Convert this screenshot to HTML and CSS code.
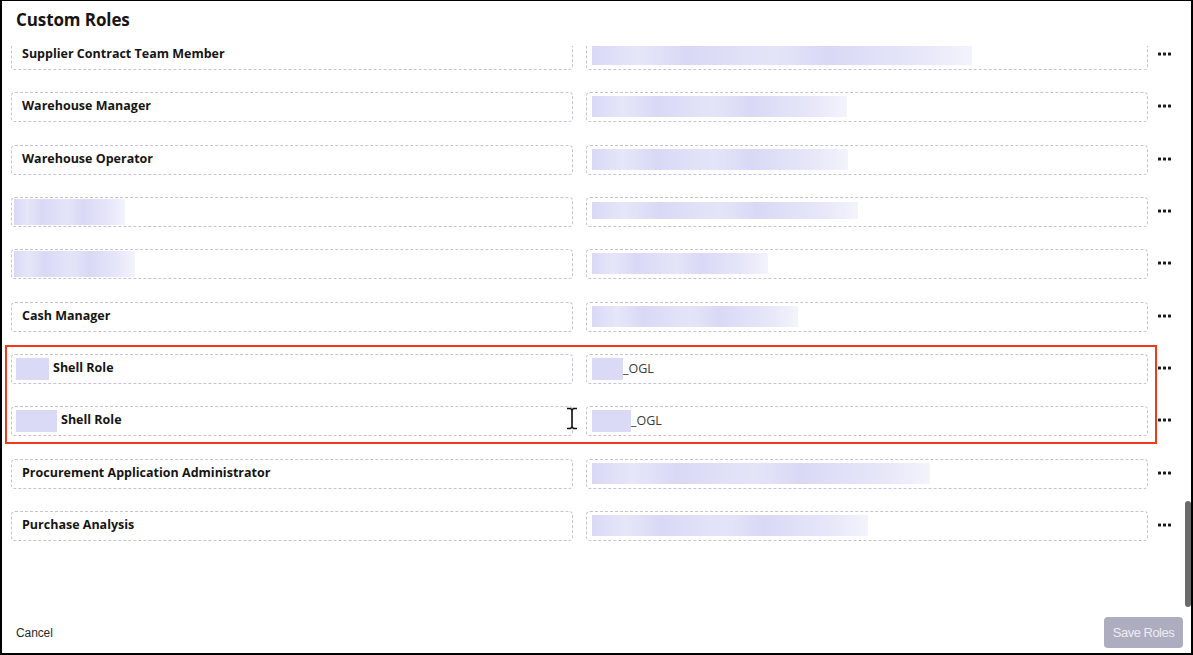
FILE: index.html
```html
<!DOCTYPE html>
<html>
<head>
<meta charset="utf-8">
<title>Custom Roles</title>
<link rel="stylesheet" href="styles.css">
</head>
<body>
<div class="dialog">
  <header class="header"><h1 class="title">Custom Roles</h1></header>
  <div class="list">
    <div class="list-inner">
      <div class="row">
        <div class="field name">Supplier Contract Team Member</div>
        <div class="field code"><span class="blur" style="width:380px"></span></div>
        <div class="more"><svg width="13" height="4" viewBox="0 0 13 4"><rect x="0" y="0.5" width="3" height="3" rx="0.6"/><rect x="5" y="0.5" width="3" height="3" rx="0.6"/><rect x="10" y="0.5" width="3" height="3" rx="0.6"/></svg></div>
      </div>
      <div class="row">
        <div class="field name">Warehouse Manager</div>
        <div class="field code"><span class="blur" style="width:255px"></span></div>
        <div class="more"><svg width="13" height="4" viewBox="0 0 13 4"><rect x="0" y="0.5" width="3" height="3" rx="0.6"/><rect x="5" y="0.5" width="3" height="3" rx="0.6"/><rect x="10" y="0.5" width="3" height="3" rx="0.6"/></svg></div>
      </div>
      <div class="row">
        <div class="field name">Warehouse Operator</div>
        <div class="field code"><span class="blur" style="width:256px"></span></div>
        <div class="more"><svg width="13" height="4" viewBox="0 0 13 4"><rect x="0" y="0.5" width="3" height="3" rx="0.6"/><rect x="5" y="0.5" width="3" height="3" rx="0.6"/><rect x="10" y="0.5" width="3" height="3" rx="0.6"/></svg></div>
      </div>
      <div class="row">
        <div class="field name"><span class="blur tall" style="width:111px"></span></div>
        <div class="field code"><span class="blur thin" style="width:266px"></span></div>
        <div class="more"><svg width="13" height="4" viewBox="0 0 13 4"><rect x="0" y="0.5" width="3" height="3" rx="0.6"/><rect x="5" y="0.5" width="3" height="3" rx="0.6"/><rect x="10" y="0.5" width="3" height="3" rx="0.6"/></svg></div>
      </div>
      <div class="row">
        <div class="field name"><span class="blur tall" style="width:121px"></span></div>
        <div class="field code"><span class="blur" style="width:176px"></span></div>
        <div class="more"><svg width="13" height="4" viewBox="0 0 13 4"><rect x="0" y="0.5" width="3" height="3" rx="0.6"/><rect x="5" y="0.5" width="3" height="3" rx="0.6"/><rect x="10" y="0.5" width="3" height="3" rx="0.6"/></svg></div>
      </div>
      <div class="row">
        <div class="field name">Cash Manager</div>
        <div class="field code"><span class="blur" style="width:206px"></span></div>
        <div class="more"><svg width="13" height="4" viewBox="0 0 13 4"><rect x="0" y="0.5" width="3" height="3" rx="0.6"/><rect x="5" y="0.5" width="3" height="3" rx="0.6"/><rect x="10" y="0.5" width="3" height="3" rx="0.6"/></svg></div>
      </div>
      <div class="group">
        <div class="row">
          <div class="field name"><span class="blur inline" style="width:33px"></span>Shell Role</div>
          <div class="field code"><span class="blur inline" style="width:31px"></span><span class="code-text">_OGL</span></div>
          <div class="more"><svg width="13" height="4" viewBox="0 0 13 4"><rect x="0" y="0.5" width="3" height="3" rx="0.6"/><rect x="5" y="0.5" width="3" height="3" rx="0.6"/><rect x="10" y="0.5" width="3" height="3" rx="0.6"/></svg></div>
        </div>
        <div class="row">
          <div class="field name"><span class="blur inline" style="width:41px"></span>Shell Role</div>
          <div class="field code"><span class="blur inline" style="width:39px"></span><span class="code-text">_OGL</span></div>
          <div class="more"><svg width="13" height="4" viewBox="0 0 13 4"><rect x="0" y="0.5" width="3" height="3" rx="0.6"/><rect x="5" y="0.5" width="3" height="3" rx="0.6"/><rect x="10" y="0.5" width="3" height="3" rx="0.6"/></svg></div>
        </div>
        <svg class="ibeam" width="12" height="23" viewBox="0 0 12 23"><path d="M1 1.5h3.5l1.5 1.5 1.5-1.5H11M6 3v17M1 21.5h3.5L6 20l1.5 1.5H11" fill="none" stroke="#111" stroke-width="1.6"/></svg>
      </div>
      <div class="row">
        <div class="field name">Procurement Application Administrator</div>
        <div class="field code"><span class="blur" style="width:338px"></span></div>
        <div class="more"><svg width="13" height="4" viewBox="0 0 13 4"><rect x="0" y="0.5" width="3" height="3" rx="0.6"/><rect x="5" y="0.5" width="3" height="3" rx="0.6"/><rect x="10" y="0.5" width="3" height="3" rx="0.6"/></svg></div>
      </div>
      <div class="row">
        <div class="field name">Purchase Analysis</div>
        <div class="field code"><span class="blur" style="width:276px"></span></div>
        <div class="more"><svg width="13" height="4" viewBox="0 0 13 4"><rect x="0" y="0.5" width="3" height="3" rx="0.6"/><rect x="5" y="0.5" width="3" height="3" rx="0.6"/><rect x="10" y="0.5" width="3" height="3" rx="0.6"/></svg></div>
      </div>
    </div>
    <div class="scrollbar"></div>
  </div>
  <footer class="footer">
    <a class="cancel">Cancel</a>
    <button class="save">Save Roles</button>
  </footer>
</div>
</body>
</html>
```

FILE: styles.css
```css
* { box-sizing: border-box; }

html, body {
  margin: 0;
  padding: 0;
  background: #ffffff;
}

.dialog {
  width: 1193px;
  height: 655px;
  border-style: solid;
  border-color: #000;
  border-width: 1px 2px 2px 2px;
  background: #fff;
  display: flex;
  flex-direction: column;
  font-family: "Open Sans", "Liberation Sans", sans-serif;
  color: #161513;
}

.header {
  height: 45px;
  flex: none;
  padding: 8px 0 0 14px;
}

.title {
  margin: 0;
  font-size: 17px;
  font-weight: 700;
  line-height: 22px;
  color: #161513;
  letter-spacing: -0.1px;
}

.list {
  flex: 1;
  position: relative;
  overflow: hidden;
  padding-left: 9px;
}

.list-inner {
  margin-top: -6px;
}

.row {
  display: grid;
  grid-template-columns: 562px 562px 24px;
  column-gap: 13px;
  height: 30px;
  margin-bottom: 22.35px;
}

.group {
  position: relative;
}

.group::before {
  content: "";
  position: absolute;
  left: -6px;
  top: -9px;
  width: 1148px;
  height: 95px;
  border: 2px solid #f2391b;
  pointer-events: none;
}

.field {
  border: 1px dashed #c5c2d8;
  border-radius: 4px;
  display: flex;
  align-items: flex-start;
  padding: 4px 10px 0 10px;
  font-size: 12.5px;
  line-height: 18px;
  white-space: nowrap;
}

.name {
  font-weight: 700;
}

.code {
  padding-left: 5px;
  font-weight: 400;
}

.blur {
  display: block;
  height: 21px;
  margin-top: -1px;
  background:
    linear-gradient(90deg, rgba(255,255,255,0) 0, rgba(255,255,255,0.35) 12%, rgba(255,255,255,0) 25%, rgba(255,255,255,0.3) 48%, rgba(255,255,255,0) 62%, rgba(255,255,255,0.4) 88%, rgba(255,255,255,0.7) 100%),
    #d9d9f6;
}

.name .blur {
  margin-left: -8px;
}

.blur.tall {
  height: 26px;
  margin-top: -3px;
}

.blur.thin {
  height: 17px;
  margin-top: 0;
}

.blur.inline {
  height: 22px;
  margin-top: -1px;
  margin-right: 4px;
  background: #dadaf7;
}

.name .blur.inline {
  margin-left: -6px;
}

.code-text {
  color: #3a3a3a;
  font-size: 12.5px;
  margin-left: -4px;
  padding-top: 1px;
}

.more {
  display: flex;
  align-items: flex-start;
  padding-top: 12px;
  margin-left: -3px;
}

.more svg {
  fill: #1a1a1a;
}

.ibeam {
  position: absolute;
  left: 555px;
  top: 53px;
}

.scrollbar {
  position: absolute;
  right: 0;
  top: 455px;
  width: 6px;
  height: 106px;
  border-radius: 3px;
  background: #6b6b6b;
}

.footer {
  height: 46px;
  flex: none;
  display: flex;
  align-items: center;
  justify-content: space-between;
  padding: 6px 8px 1px 14px;
}

.cancel {
  font-family: "Liberation Sans", Arial, sans-serif;
  font-size: 12px;
  color: #2a2a2a;
  letter-spacing: -0.1px;
}

.save {
  width: 79px;
  height: 31px;
  border: none;
  border-radius: 4px;
  background: #aeacbf;
  color: #ececf4;
  font-family: "Liberation Sans", Arial, sans-serif;
  font-size: 13px;
  letter-spacing: -0.5px;
  padding: 0;
}
```
